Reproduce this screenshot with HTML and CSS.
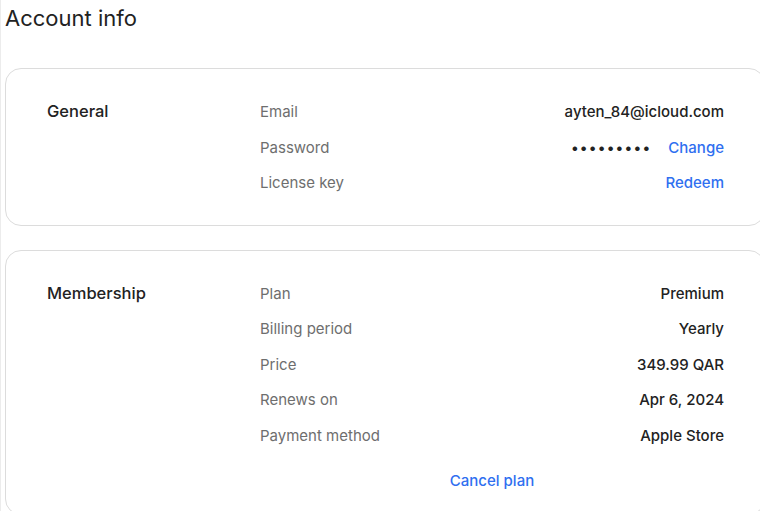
FILE: index.html
```html
<!DOCTYPE html>
<html>
<head>
<meta charset="utf-8">
<link rel="stylesheet" href="styles.css">
</head>
<body>
<div class="page">
  <h1 class="page-title">Account info</h1>
  <section class="card">
    <h2 class="card-title">General</h2>
    <div class="rows">
      <div class="row"><span class="label">Email</span><span class="value">ayten_84@icloud.com</span></div>
      <div class="row"><span class="label">Password</span><span class="value"><span class="dots">•••••••••</span><a class="link">Change</a></span></div>
      <div class="row"><span class="label">License key</span><span class="value"><a class="link">Redeem</a></span></div>
    </div>
  </section>
  <section class="card">
    <h2 class="card-title">Membership</h2>
    <div class="rows">
      <div class="row"><span class="label">Plan</span><span class="value">Premium</span></div>
      <div class="row"><span class="label">Billing period</span><span class="value">Yearly</span></div>
      <div class="row"><span class="label">Price</span><span class="value">349.99 QAR</span></div>
      <div class="row"><span class="label">Renews on</span><span class="value">Apr 6, 2024</span></div>
      <div class="row"><span class="label">Payment method</span><span class="value">Apple Store</span></div>
      <div class="cancel"><a class="link">Cancel plan</a></div>
    </div>
  </section>
</div>
</body>
</html>
```
FILE: styles.css
```css
html, body {
  margin: 0;
  padding: 0;
  background: #fff;
  overflow: hidden;
}
body {
  font-family: Inter, "Noto Sans", sans-serif;
  color: #222;
  width: 760px;
  height: 511px;
}
.page {
  border-left: 1px solid #ececec;
  padding-left: 4px;
  width: 770px;
  height: 511px;
  box-sizing: border-box;
}
.page-title {
  margin: 0;
  font-size: 22px;
  font-weight: 400;
  line-height: 36px;
  color: #222;
}
.card {
  margin-top: 32px;
  border: 1px solid #dcdcdc;
  border-radius: 16px;
  width: 760px;
  box-sizing: border-box;
  padding: 25px 0 24px 41px;
  display: flex;
}
.card + .card {
  margin-top: 24px;
}
.card-title {
  margin: 0;
  width: 213px;
  font-size: 16.5px;
  font-weight: 500;
  line-height: 35.5px;
  color: #222;
}
.rows {
  width: 464px;
  display: flex;
  flex-direction: column;
}
.row {
  display: flex;
  justify-content: space-between;
  align-items: center;
  height: 35.5px;
  font-size: 15px;
}
.label {
  color: #6e6e6e;
}
.value {
  font-weight: 500;
  color: #222;
  display: flex;
  align-items: center;
}
.dots {
  letter-spacing: 1.2px;
  font-size: 14.5px;
  margin-right: 17px;
}
.link {
  color: #2f6ff0;
  font-weight: 500;
  cursor: pointer;
}
.cancel {
  text-align: center;
  font-size: 15px;
  padding-top: 18px;
}
```
